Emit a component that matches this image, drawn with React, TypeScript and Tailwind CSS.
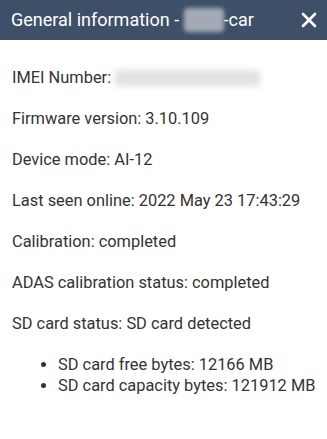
import { X } from "lucide-react";

const rows = [
  "Firmware version: 3.10.109",
  "Device mode: AI-12",
  "Last seen online: 2022 May 23 17:43:29",
  "Calibration: completed",
  "ADAS calibration status: completed",
  "SD card status: SD card detected",
];

export default function App() {
  return (
    <div className="h-[439px] w-[327px] overflow-hidden bg-white font-['Roboto',sans-serif]">
      <header className="flex h-10 items-center justify-between bg-[#3d5068] pl-[11px] pr-[6px] text-white">
        <h1 className="flex items-center text-[18px] leading-none">
          General information -&nbsp;
          <span className="inline-block h-6 w-[40px] rounded-sm bg-[#a3aab6] blur-[2px]" />
          -car
        </h1>
        <X size={24} strokeWidth={2.6} />
      </header>
      <div className="px-3 pt-[28px] text-[16.4px] leading-5 text-[#333]">
        <p className="flex items-center">
          IMEI Number:&nbsp;
          <span className="inline-block h-4 w-[145px] bg-[#e2e2e2] blur-[3px]" />
        </p>
        {rows.map((r) => (
          <p key={r} className="mt-[21px]">
            {r}
          </p>
        ))}
        <ul className="mt-[20px] list-disc whitespace-nowrap pl-[46px] leading-[21px]">
          <li>SD card free bytes: 12166 MB</li>
          <li>SD card capacity bytes: 121912 MB</li>
        </ul>
      </div>
    </div>
  );
}
